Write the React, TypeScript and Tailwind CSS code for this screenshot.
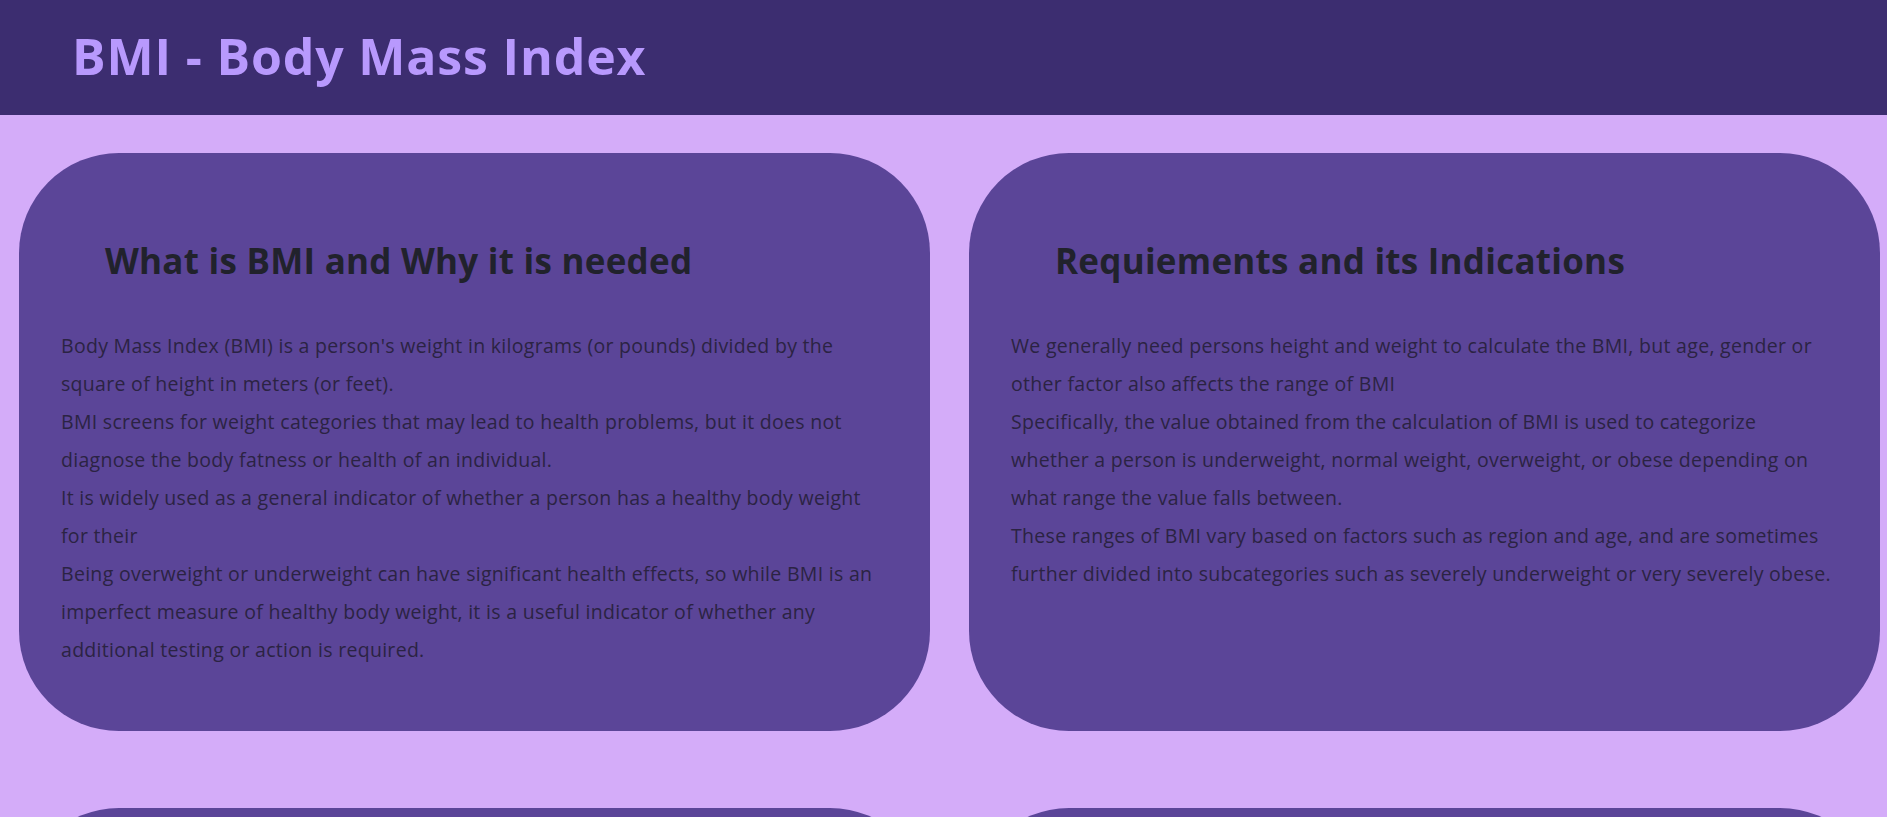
const sections = [
  {
    title: 'What is BMI and Why it is needed',
    paragraphs: [
      [
        "Body Mass Index (BMI) is a person's weight in kilograms (or pounds) divided by the",
        'square of height in meters (or feet).',
      ],
      [
        'BMI screens for weight categories that may lead to health problems, but it does not',
        'diagnose the body fatness or health of an individual.',
      ],
      [
        'It is widely used as a general indicator of whether a person has a healthy body weight',
        'for their',
      ],
      [
        'Being overweight or underweight can have significant health effects, so while BMI is an',
        'imperfect measure of healthy body weight, it is a useful indicator of whether any',
        'additional testing or action is required.',
      ],
    ],
  },
  {
    title: 'Requiements and its Indications',
    paragraphs: [
      [
        'We generally need persons height and weight to calculate the BMI, but age, gender or',
        'other factor also affects the range of BMI',
      ],
      [
        'Specifically, the value obtained from the calculation of BMI is used to categorize',
        'whether a person is underweight, normal weight, overweight, or obese depending on',
        'what range the value falls between.',
      ],
      [
        'These ranges of BMI vary based on factors such as region and age, and are sometimes',
        'further divided into subcategories such as severely underweight or very severely obese.',
      ],
    ],
  },
];

function InfoCard({ title, paragraphs }: { title?: string; paragraphs?: string[][] }) {
  return (
    <section className="h-[578px] rounded-[100px] bg-[#5b4598] pt-[87px]">
      {title && (
        <h2 className="pl-[86px] text-[35px] font-bold leading-[42px] tracking-[0.25px] text-[#21222c]">
          {title}
        </h2>
      )}
      <div className="mt-[45px] px-[42px] text-[19.5px] leading-[38px] tracking-[0.3px] text-[#2b2343]">
        {paragraphs?.map((lines, i) => (
          <p key={i}>
            {lines.map((line, j) => (
              <span key={j} className="block whitespace-nowrap">
                {line}
              </span>
            ))}
          </p>
        ))}
      </div>
    </section>
  );
}

export default function App() {
  return (
    <div className="min-h-screen bg-[#d4acf9] font-['Open_Sans',sans-serif]">
      <header className="h-[115px] bg-[#3c2d70] pl-[72px] pt-[26px]">
        <h1 className="text-[50px] font-bold leading-[60px] tracking-[0.85px] text-[#b899fd]">
          BMI - Body Mass Index
        </h1>
      </header>

      <main className="grid grid-cols-[911px_911px] gap-x-[39px] gap-y-[77px] pl-[19px] pt-[38px] pb-[40px]">
        {sections.map((s) => (
          <InfoCard key={s.title} title={s.title} paragraphs={s.paragraphs} />
        ))}
        <InfoCard />
        <InfoCard />
      </main>
    </div>
  );
}
